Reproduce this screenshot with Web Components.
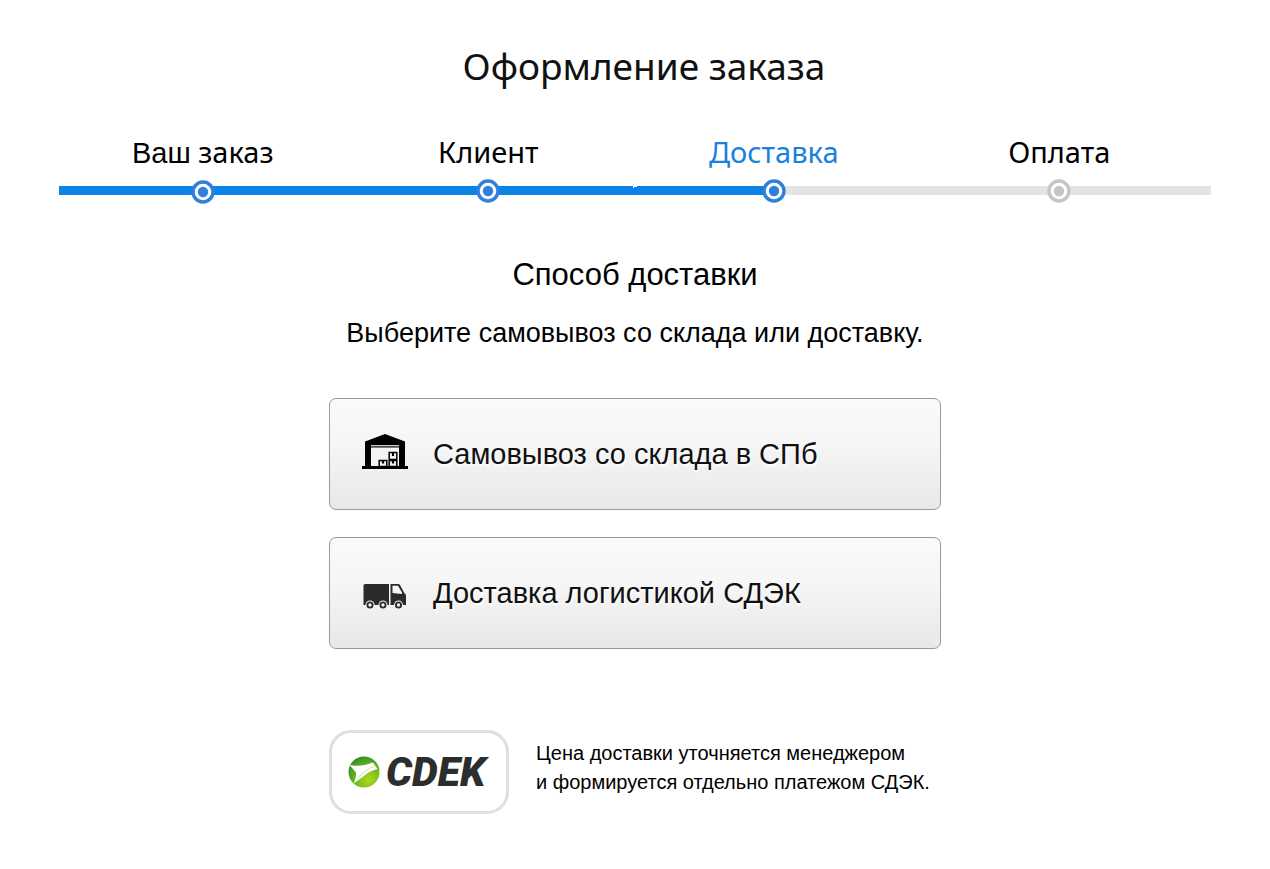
<!DOCTYPE html>
<html lang="ru">
<head>
<meta charset="utf-8">
<meta name="viewport" content="width=device-width, initial-scale=1">
<title>Оформление заказа</title>
<style>
  body { margin: 0; background: #fff; color: #000; font-family: "Liberation Sans", Arial, sans-serif; }
</style>
</head>
<body>
<checkout-page>
  <checkout-steps>
    <checkout-step state="done"><span style="font-family:'Liberation Sans',Arial,sans-serif">Ваш</span> заказ</checkout-step>
    <checkout-step state="done">Клиент</checkout-step>
    <checkout-step state="current">Доставка</checkout-step>
    <checkout-step>Оплата</checkout-step>
  </checkout-steps>
  <delivery-methods>
    <delivery-option icon="warehouse">Самовывоз со склада в СПб</delivery-option>
    <delivery-option icon="truck">Доставка логистикой СДЭК</delivery-option>
  </delivery-methods>
  <carrier-note>Цена доставки уточняется менеджером<br>и формируется отдельно платежом СДЭК.</carrier-note>
</checkout-page>

<script>
class ShadowElement extends HTMLElement {
  constructor() {
    super();
    this.attachShadow({ mode: 'open' }).innerHTML = this.constructor.markup(this);
  }
}

customElements.define('checkout-page', class extends ShadowElement {
  static markup() {
    return `<style>
      :host { display: block; padding: 39px 59px 56px; }
      h1 { margin: 0 0 39px; padding-left: 18px; font: 400 37px/54px "Noto Sans", sans-serif; color: #111; text-align: center; }
    </style>
    <main><h1>Оформление заказа</h1><slot></slot></main>`;
  }
});

customElements.define('checkout-steps', class extends ShadowElement {
  static markup() {
    return `<style>
      :host { display: block; background:
        linear-gradient(to bottom right, #fff 50%, transparent 50%) 50% 54px / 5px 2px no-repeat,
        linear-gradient(90deg, #0a82e6 62%, #e4e4e4 62%) 0 54px / 100% 9px no-repeat; }
      nav { display: grid; grid-template-columns: repeat(4, 1fr); padding: 0 9px 0 1px; }
    </style>
    <nav aria-label="Шаги оформления"><slot></slot></nav>`;
  }
});

customElements.define('checkout-step', class extends ShadowElement {
  static markup() {
    return `<style>
      :host { display: flex; flex-direction: column; align-items: center; gap: 7px;
        font: 400 29px/40px "Noto Sans", sans-serif; color: #000; --ring: #c3c6c6; }
      :host([state]) { --ring: #2f80dc; }
      :host([state="current"]) { color: #1a81dd; }
      svg { display: block; width: 24px; height: 24px; }
    </style>
    <span><slot></slot></span>
    <svg viewBox="0 0 24 24" aria-hidden="true">
      <circle cx="12" cy="12" r="10" fill="#fff" stroke="var(--ring)" stroke-width="3.4"/>
      <circle cx="12" cy="12" r="5.2" fill="var(--ring)"/>
    </svg>`;
  }
});

customElements.define('delivery-methods', class extends ShadowElement {
  static markup() {
    return `<style>
      :host { display: block; margin-top: 51px; text-align: center; }
      h2 { margin: 0 0 22px; font-size: 31px; line-height: 40px; font-weight: 400; }
      p { margin: 0 0 49px; font-size: 27px; line-height: 32px; }
      div { display: grid; gap: 27px; max-width: 612px; margin: 0 auto; }
    </style>
    <section><h2>Способ доставки</h2>
    <p>Выберите самовывоз со склада или доставку.</p>
    <div><slot></slot></div></section>`;
  }
});

const icons = {
  warehouse: `<svg viewBox="0 0 46 36" aria-hidden="true">
    <path fill="#000" fill-rule="evenodd" d="M23 0 43 7.500V32H46V35H0V32H3V7.500ZM9 13.500V32H37V13.500Z"/>
    <path fill="#fff" d="M9 11.200H37V12.300H9Z"/>
    <g fill="none" stroke="#000" stroke-width="1.500"><path d="M27.200 18.500h7.600v7h-7.600zM17.200 26.500h7.600v6h-7.600zM27.200 26.500h7.600v6h-7.600z"/>
    <path stroke-width="2.200" d="M31 18.500v3.500M21 26.500v3M31 26.500v3"/></g>
  </svg>`,
  truck: `<svg viewBox="0 0 46 36" aria-hidden="true"><g transform="translate(-.5 4)">
    <path fill="#2b2b2b" d="M3.500 7H27.500V28H2V8.500Q2 7 3.500 7ZM29 7H37Q38 7 38.500 8L42.500 15.500 44.500 18V28H29Z"/>
    <path fill="#f5f5f5" d="M31 8.800H36.500L40.500 15.500V17L31 16Z"/>
    <g fill="#f5f5f5"><circle cx="8.500" cy="28" r="4.500"/><circle cx="21.500" cy="28" r="4.500"/><circle cx="37" cy="28" r="4.500"/></g>
    <g fill="#f5f5f5" stroke="#2b2b2b" stroke-width="1.900"><circle cx="8.500" cy="28" r="2.600"/><circle cx="21.500" cy="28" r="2.600"/><circle cx="37" cy="28" r="2.600"/></g>
  </g></svg>`
};

customElements.define('delivery-option', class extends ShadowElement {
  static markup(host) {
    return `<style>
      :host { display: block; }
      button { display: flex; align-items: center; gap: 25px; width: 100%; min-height: 112px; box-sizing: border-box;
        padding: 0 32px; border: 1px solid #999; border-radius: 7px; cursor: pointer; text-align: left;
        background: linear-gradient(#fafafa, #f6f6f6 40%, #e8e8e8); color: #111;
        font: 400 29px/36px "Liberation Sans", Arial, sans-serif; text-shadow: 1px 2px 2px #fff; }
      svg { flex: none; width: 46px; height: 36px; margin-bottom: 4px; }
    </style>
    <button type="button">${icons[host.getAttribute('icon')]}<span><slot></slot></span></button>`;
  }
});

customElements.define('carrier-note', class extends ShadowElement {
  static markup() {
    return `<style>
      :host { display: flex; align-items: flex-start; gap: 27px; max-width: 612px; margin: 81px auto 0; }
      .logo { display: flex; flex: none; align-items: center; gap: 6px; width: 180px; height: 84px; padding-left: 16px;
        box-sizing: border-box; border: 3px solid #dfdfdf; border-radius: 22px; background: #fff; }
      .logo svg { width: 32px; height: 32px; }
      .word { font: italic 900 41px/40px Roboto, sans-serif; color: #2b2e2c; }
      p { margin: 9px 0 0; font-size: 20px; line-height: 29px; }
    </style>
    <div class="logo">
      <svg viewBox="0 0 32 32" aria-hidden="true">
        <defs><radialGradient id="g" cx=".65" cy=".75" r=".8"><stop offset="0" stop-color="#b0da1c"/><stop offset=".5" stop-color="#74bb1d"/><stop offset="1" stop-color="#2f8c2c"/></radialGradient></defs>
        <circle cx="16" cy="16" r="15.500" fill="url(#g)"/>
        <path fill="#fff" d="M1.500 9Q8 10.500 17 9L25 6.500 29.500 13Q21 15 16 20L5.500 27.500Q8.500 21 8 16.500Q5 13 1.500 9Z"/>
        <path fill="none" stroke="#b9dd8d" stroke-width=".8" d="M9 23Q16 14 27 10"/>
      </svg>
      <span class="word">CDEK</span>
    </div>
    <p><slot></slot></p>`;
  }
});
</script>
</body>
</html>
